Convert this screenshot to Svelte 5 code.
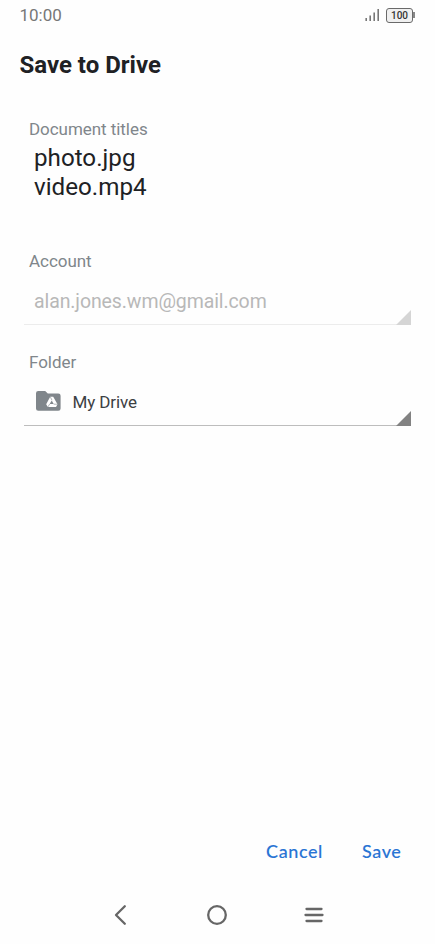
<script lang="ts">
  const time = '10:00';
  const battery = 100;
  const documents = ['photo.jpg', 'video.mp4'];
  const account = 'alan.jones.wm@gmail.com';
  const folder = 'My Drive';
</script>

<div class="screen">
  <header class="status">
    <span class="time">{time}</span>
    <div class="indicators">
      <svg class="signal" width="15" height="14" viewBox="0 0 15 14" stroke="#777" stroke-width="1.6">
        <path d="M1.2 10v3M5.2 7.5V13M9.2 4.5V13M13.2 1v12" />
      </svg>
      <div class="battery">{battery}</div>
      <div class="battery-tip"></div>
    </div>
  </header>

  <h1>Save to Drive</h1>

  <main>
    <section class="documents">
      <div class="label">Document titles</div>
      <div class="names">
        {#each documents as name}
          <div class="document">{name}</div>
        {/each}
      </div>
    </section>

    <section class="account">
      <div class="label">Account</div>
      <div class="spinner disabled">
        <span class="email">{account}</span>
        <svg class="corner" width="15" height="15" viewBox="0 0 15 15"><path d="M15 0v15H0z" /></svg>
      </div>
    </section>

    <section class="folder">
      <div class="label">Folder</div>
      <div class="spinner">
        <svg class="folder-icon" width="25" height="20" viewBox="0 0 25 20">
          <path fill="#80868b" d="M2.2 0h7l2.6 2.5h10.5a2.3 2.3 0 0 1 2.3 2.3v12.7a2.3 2.3 0 0 1-2.3 2.3h-20A2.3 2.3 0 0 1 0 17.5V2.2A2.2 2.2 0 0 1 2.2 0z" />
          <path fill="#fff" d="M14.2 5.7h3l4.3 7.5-1.5 2.8h-8.200l-1.600-2.800z" />
          <path fill="#80868b" d="M15.7 9.500l2 3.500h-4z" />
          <path fill="none" stroke="#80868b" stroke-width=".6" d="M14.200 5.700l1.800 3.500M21.500 13.200h-3.800M11.800 16l1.900-3" />
        </svg>
        <span class="folder-name">{folder}</span>
        <svg class="corner" width="15" height="15" viewBox="0 0 15 15"><path d="M15 0v15H0z" /></svg>
      </div>
    </section>
  </main>

  <footer class="actions">
    <button class="cancel">Cancel</button>
    <button class="save">Save</button>
  </footer>

  <nav>
    <svg width="24" height="24" viewBox="0 0 24 24"><path d="M16.8 3.2L8 12l8.8 8.8" /></svg>
    <svg width="24" height="24" viewBox="0 0 24 24"><circle cx="12" cy="12" r="8.8" /></svg>
    <svg width="24" height="24" viewBox="0 0 24 24"><path d="M4.5 6h15M3.5 12h17M4.5 18h15" /></svg>
  </nav>
</div>

<style>
  :global(body) {
    background: #fefefe;
  }

  .screen {
    display: flex;
    flex-direction: column;
    box-sizing: border-box;
    height: 944px;
    font-family: Roboto, "Liberation Sans", sans-serif;
    color: #202124;
    white-space: nowrap;
  }

  .status {
    display: flex;
    align-items: center;
    justify-content: space-between;
    height: 30px;
    padding: 0 21px 0 19.5px;
  }

  .time {
    font-size: 17px;
    line-height: 20px;
    color: #777;
  }

  .indicators {
    display: flex;
    align-items: center;
  }

  .signal {
    margin-right: 6px;
  }

  .battery {
    box-sizing: border-box;
    width: 27px;
    height: 15px;
    border: 1.5px solid #6a6a6a;
    border-radius: 3px;
    background: #f0f0f0;
    font-size: 10px;
    font-weight: 500;
    line-height: 13px;
    text-align: center;
    color: #333;
  }

  .battery-tip {
    width: 2px;
    height: 6px;
    margin-right: -1px;
    background: #888;
  }

  h1 {
    margin: 21px 0 0 19.5px;
    font-size: 24px;
    font-weight: 700;
    line-height: 28px;
  }

  main {
    flex: 1;
    padding: 40px 24px 0;
  }

  .label {
    padding-left: 5px;
    font-size: 17px;
    line-height: 20px;
    letter-spacing: -0.05px;
    color: #80868b;
  }

  .documents {
    height: 132px;
  }

  .names {
    padding-top: 5px;
  }

  .document {
    padding-left: 10px;
    font-size: 24.2px;
    line-height: 28.5px;
  }

  .account {
    height: 101px;
  }

  .spinner {
    position: relative;
    display: flex;
    align-items: center;
    box-sizing: border-box;
    height: 54px;
    padding: 5px 0 0 10px;
    border-bottom: 1px solid #bdbdbd;
  }

  .spinner.disabled {
    height: 54px;
    padding-top: 9px;
    border-color: #ececec;
  }

  .corner {
    position: absolute;
    right: 0;
    bottom: -1px;
    fill: #828282;
  }

  .disabled .corner {
    fill: #d5d5d5;
  }

  .email {
    font-size: 19.5px;
    line-height: 24px;
    letter-spacing: -0.1px;
    color: #b8b8b8;
  }

  .folder-icon {
    margin: 0 11.5px 0 2px;
  }

  .folder-name {
    padding-top: 1px;
    font-size: 17px;
    line-height: 20px;
    letter-spacing: -0.1px;
    color: #3c4043;
  }

  .actions {
    display: flex;
    justify-content: flex-end;
    gap: 39px;
    height: 48px;
    padding-right: 33.5px;
  }

  button {
    height: 46px;
    padding: 0;
    border: 0;
    background: none;
    font: 500 18px/46px Lato, Roboto, sans-serif;
    letter-spacing: 0.6px;
    color: #2874d4;
    -webkit-text-stroke: 0.1px #2874d4;
  }

  nav {
    display: flex;
    justify-content: center;
    align-items: center;
    gap: 73px;
    height: 58px;
    margin-top: 10px;
    padding-right: 1px;
  }

  nav svg {
    fill: none;
    stroke: #666;
    stroke-width: 2.3;
    stroke-linecap: round;
    stroke-linejoin: round;
  }
</style>
